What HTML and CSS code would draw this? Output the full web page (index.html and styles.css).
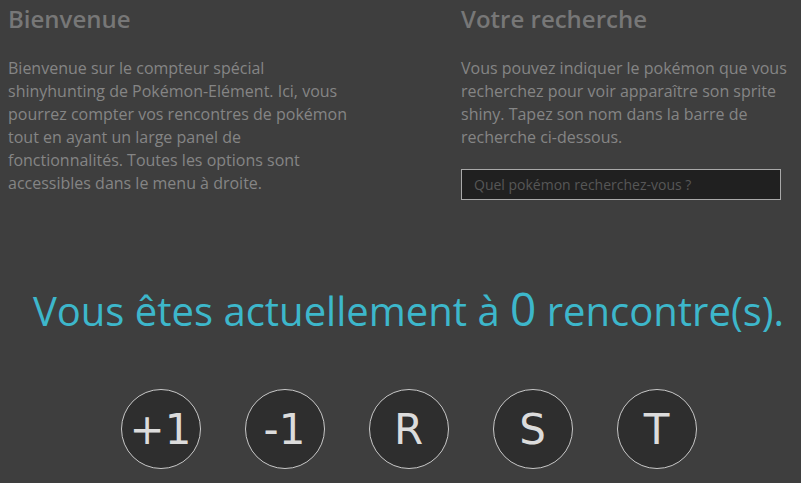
FILE: index.html
```html
<!DOCTYPE html>
<html>
<head>
    <title>Compteur shinyhunting</title>
    <link rel="stylesheet" href="styles.css">
</head>
<body>

    <div class="intro">
        <div class="intro-col intro-left">
            <h2>Bienvenue</h2>
            <p>Bienvenue sur le compteur spécial shinyhunting de Pokémon-Elément. Ici, vous pourrez compter vos rencontres de pokémon tout en ayant un large panel de fonctionnalités. Toutes les options sont accessibles dans le menu à droite.</p>
        </div>
        <div class="intro-col intro-right">
            <h2>Votre recherche</h2>
            <p>Vous pouvez indiquer le pokémon que vous recherchez pour voir apparaître son sprite shiny. Tapez son nom dans la barre de recherche ci-dessous.</p>
            <input type="text" class="search" placeholder="Quel pokémon recherchez-vous ?">
        </div>
    </div>

    <!-- Compteur principal -->
    <div class="counter">
        Vous êtes actuellement à <span class="count">0</span> rencontre(s).
    </div>

    <div class="buttons">
        <button class="round-btn">+1</button>
        <button class="round-btn">-1</button>
        <button class="round-btn">R</button>
        <button class="round-btn">S</button>
        <button class="round-btn">T</button>
    </div>

</body>
</html>
```

FILE: styles.css
```css
/* Base */
body {
    font-family: "Open Sans", Arial, sans-serif;
    background-color: #3e3e3e;
    margin: 0;
    padding: 0 8px;
    overflow: hidden;
}

/* Two column intro */
.intro {
    display: flex;
    padding-top: 2px;
}

.intro-left {
    flex: none;
    width: 350px;
    margin-right: 103px;
}

.intro-right {
    flex: 1;
}

.intro-col h2 {
    font-size: 24px;
    font-weight: 600;
    color: #777;
    margin: 0 0 22px 0;
}

.intro-col p {
    font-size: 16px;
    line-height: 23px;
    color: #858585;
    margin: 0 0 20px 0;
}

.search {
    display: block;
    box-sizing: border-box;
    width: 320px;
    height: 31px;
    padding: 0 12px;
    background-color: #202020;
    border: 1px solid #a9a9a9;
    color: #ccc;
    font-family: "Open Sans", Arial, sans-serif;
    font-size: 14px;
    outline: none;
}

.search::placeholder {
    color: #575757;
}

/* Counter */
.counter {
    text-align: center;
    padding-left: 16px;
    margin-top: 62px;
    font-size: 40px;
    color: #3db7cb;
}

.count {
    font-size: 46px;
}

.buttons {
    display: flex;
    justify-content: center;
    gap: 44px;
    padding-left: 16px;
    margin-top: 50px;
}

.round-btn {
    width: 80px;
    height: 80px;
    border-radius: 50%;
    border: 1px solid #c8c8c8;
    background-color: #2e2e2e;
    color: #dcdcdc;
    font-family: "DejaVu Sans", Verdana, sans-serif;
    font-size: 42px;
    padding: 0;
    cursor: pointer;
}
```
